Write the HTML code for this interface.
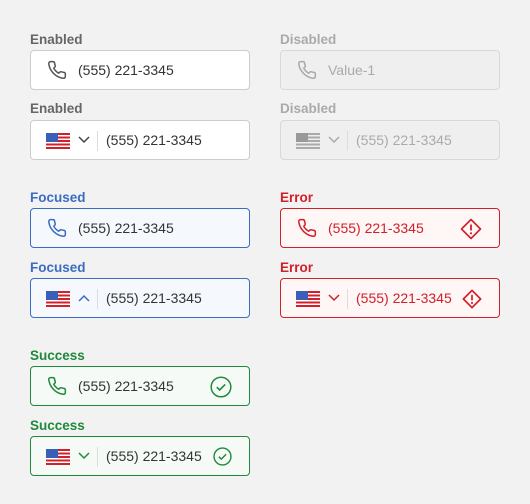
<!DOCTYPE html>
<html><head><meta charset="utf-8"><style>
body{margin:0;width:530px;height:504px;background:#f2f2f2;font-family:"Liberation Sans","DejaVu Sans",sans-serif;position:relative;overflow:hidden}
.l{position:absolute;font-size:13.5px;font-weight:bold;color:#666;margin-top:1px}
.b{position:absolute;width:218px;height:38px;border:1px solid #ccc;border-radius:4px;background:#fff;box-sizing:content-box}
.b svg{position:absolute}
.t{position:absolute;top:11px;font-size:14px;color:#333;line-height:16px}
.ph{left:16px;top:9px}
.f{left:15px;top:12px}
.c{left:46px;top:14px}
.d{position:absolute;left:66px;top:10px;width:1px;height:20px;background:#ddd}
.st{right:17px;top:9px}
.dis{background:#efefef;border-color:#d8d8d8}
.dis .t{color:#aaa}
.foc{background:#f5f9fd;border-color:#3a6cc4}
.err{background:#fff6f6;border-color:#d0202a}
.err .t{color:#d0202a}
.suc{background:#f6faf6;border-color:#1e8a3a}
</style></head><body>
<svg width="0" height="0" style="position:absolute"><defs>
<symbol id="phone" viewBox="0 0 24 24"><path fill="none" stroke-width="1.8" stroke-linejoin="round" d="M22 16.92v3a2 2 0 0 1-2.18 2 19.79 19.79 0 0 1-8.63-3.07 19.5 19.5 0 0 1-6-6 19.79 19.790 0 0 1-3.07-8.67A2 2 0 0 1 4.11 2h3a2 2 0 0 1 2 1.72c.127.96.361 1.903.7 2.81a2 2 0 0 1-.45 2.11L8.09 9.91a16 16 0 0 0 6 6l1.27-1.27a2 2 0 0 1 2.11-.45c.907.339 1.85.573 2.81.7A2 2 0 0 1 22 16.92z"/></symbol>
<symbol id="flag" viewBox="0 0 24 16"><rect width="24" height="16" fill="#fff"/><g fill="#d0202a"><rect y="0" width="24" height="2"/><rect y="3.5" width="24" height="2"/><rect y="7" width="24" height="2"/><rect y="10.5" width="24" height="2"/><rect y="14" width="24" height="2"/></g><rect width="12" height="9" fill="#3a5fb8"/></symbol>
<symbol id="flagg" viewBox="0 0 24 16"><rect width="24" height="16" fill="#eee"/><g fill="#aaa"><rect y="0" width="24" height="2"/><rect y="3.5" width="24" height="2"/><rect y="7" width="24" height="2"/><rect y="10.5" width="24" height="2"/><rect y="14" width="24" height="2"/></g><rect width="12" height="9" fill="#999"/></symbol>
</defs></svg>

<div class="l" style="left:30px;top:31px">Enabled</div>
<div class="b" style="left:30px;top:50px"><svg class="ph" width="20" height="20" stroke="#555"><use href="#phone"/></svg><div class="t" style="left:47px">(555) 221-3345</div></div>
<div class="l" style="left:30px;top:100px">Enabled</div>
<div class="b" style="left:30px;top:120px"><svg class="f" width="24" height="16"><use href="#flag"/></svg><svg class="c" width="14" height="10"><path d="M2 2l5 5 5-5" fill="none" stroke="#444" stroke-width="1.5"/></svg><div class="d"></div><div class="t" style="left:75px">(555) 221-3345</div></div>

<div class="l" style="left:280px;top:31px;color:#aaa">Disabled</div>
<div class="b dis" style="left:280px;top:50px"><svg class="ph" width="20" height="20" stroke="#aaa"><use href="#phone"/></svg><div class="t" style="left:47px">Value-1</div></div>
<div class="l" style="left:280px;top:100px;color:#aaa">Disabled</div>
<div class="b dis" style="left:280px;top:120px"><svg class="f" width="24" height="16"><use href="#flagg"/></svg><svg class="c" width="14" height="10"><path d="M2 2l5 5 5-5" fill="none" stroke="#aaa" stroke-width="1.5"/></svg><div class="d"></div><div class="t" style="left:75px">(555) 221-3345</div></div>

<div class="l" style="left:30px;top:189px;color:#3a6cc4">Focused</div>
<div class="b foc" style="left:30px;top:208px"><svg class="ph" width="20" height="20" stroke="#3a6cc4"><use href="#phone"/></svg><div class="t" style="left:47px">(555) 221-3345</div></div>
<div class="l" style="left:30px;top:259px;color:#3a6cc4">Focused</div>
<div class="b foc" style="left:30px;top:278px"><svg class="f" width="24" height="16"><use href="#flag"/></svg><svg class="c" width="14" height="10"><path d="M2 8l5-5 5 5" fill="none" stroke="#3a6cc4" stroke-width="1.5"/></svg><div class="d"></div><div class="t" style="left:75px">(555) 221-3345</div></div>

<div class="l" style="left:280px;top:189px;color:#d0202a">Error</div>
<div class="b err" style="left:280px;top:208px"><svg class="ph" width="20" height="20" stroke="#d0202a"><use href="#phone"/></svg><div class="t" style="left:47px">(555) 221-3345</div><svg class="st" width="22" height="22" viewBox="0 0 22 22"><path d="M11 1.5L20.5 11 11 20.5 1.5 11z" fill="none" stroke="#d0202a" stroke-width="1.6" stroke-linejoin="round"/><path d="M11 6.5v6" stroke="#d0202a" stroke-width="1.8"/><circle cx="11" cy="15.3" r="1.1" fill="#d0202a"/></svg></div>
<div class="l" style="left:280px;top:259px;color:#d0202a">Error</div>
<div class="b err" style="left:280px;top:278px"><svg class="f" width="24" height="16"><use href="#flag"/></svg><svg class="c" width="14" height="10"><path d="M2 2l5 5 5-5" fill="none" stroke="#d0202a" stroke-width="1.5"/></svg><div class="d"></div><div class="t" style="left:75px">(555) 221-3345</div><svg class="st" width="20" height="20" viewBox="0 0 22 22" style="top:10px"><path d="M11 1.5L20.5 11 11 20.5 1.5 11z" fill="none" stroke="#d0202a" stroke-width="1.8" stroke-linejoin="round"/><path d="M11 6.5v6" stroke="#d0202a" stroke-width="1.9"/><circle cx="11" cy="15.3" r="1.2" fill="#d0202a"/></svg></div>

<div class="l" style="left:30px;top:347px;color:#1e8a3a">Success</div>
<div class="b suc" style="left:30px;top:366px"><svg class="ph" width="20" height="20" stroke="#1e8a3a"><use href="#phone"/></svg><div class="t" style="left:47px">(555) 221-3345</div><svg class="st" width="22" height="22" viewBox="0 0 22 22"><circle cx="11" cy="11" r="9.8" fill="none" stroke="#1e8a3a" stroke-width="1.5"/><path d="M6.8 11.2l2.8 2.8 5.6-5.6" fill="none" stroke="#1e8a3a" stroke-width="1.6"/></svg></div>
<div class="l" style="left:30px;top:417px;color:#1e8a3a">Success</div>
<div class="b suc" style="left:30px;top:436px"><svg class="f" width="24" height="16"><use href="#flag"/></svg><svg class="c" width="14" height="10"><path d="M2 2l5 5 5-5" fill="none" stroke="#1e8a3a" stroke-width="1.5"/></svg><div class="d"></div><div class="t" style="left:75px">(555) 221-3345</div><svg class="st" width="19" height="19" viewBox="0 0 22 22" style="top:10px;right:17px"><circle cx="11" cy="11" r="9.8" fill="none" stroke="#1e8a3a" stroke-width="1.6"/><path d="M6.8 11.2l2.8 2.8 5.6-5.6" fill="none" stroke="#1e8a3a" stroke-width="1.7"/></svg></div>
</body></html>
